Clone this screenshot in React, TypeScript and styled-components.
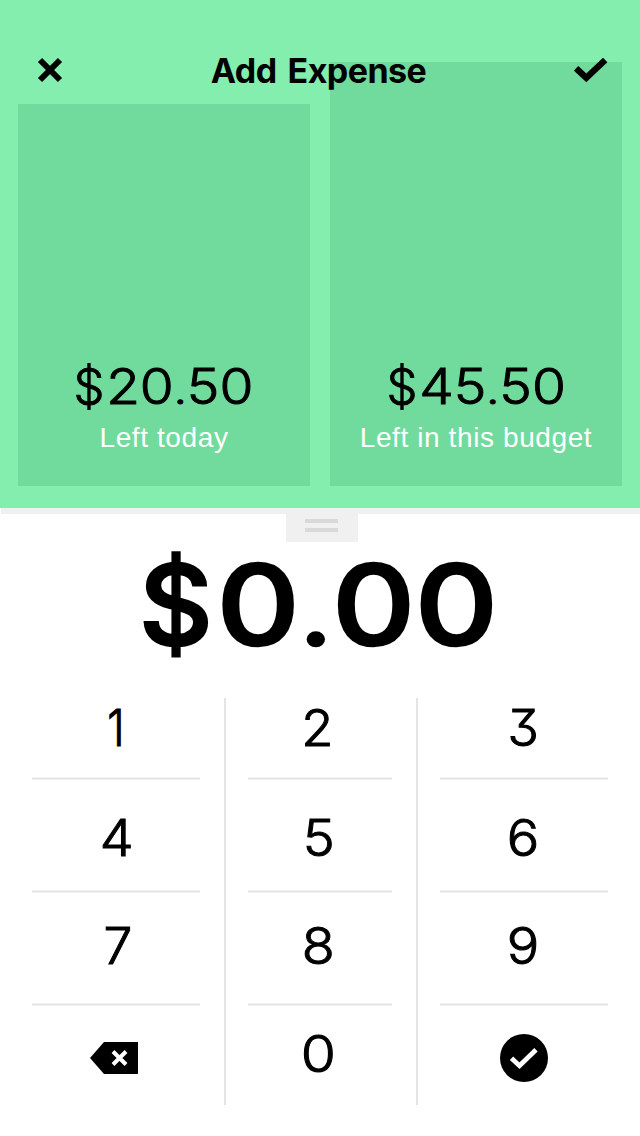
import React from "react";
import styled, { createGlobalStyle } from "styled-components";

const GlobalStyle = createGlobalStyle`
  * { box-sizing: border-box; }
  body { margin: 0; background: #fff; color: #000; font-family: Inter, "Liberation Sans", sans-serif; }
`;

const Screen = styled.main`
  width: 640px;
  height: 1136px;
  overflow: hidden;
  background: #fff;
  display: flex;
  flex-direction: column;
`;

const Summary = styled.section`
  position: relative;
  height: 508px;
  flex: none;
  background: #84eeaf;
  display: flex;
  align-items: flex-end;
  gap: 20px;
  padding: 0 18px 22px;
`;

const Header = styled.header`
  position: absolute;
  inset: 40px 0 auto 0;
  height: 60px;
  padding: 0 32px 0 37px;
  display: flex;
  align-items: center;
  justify-content: space-between;
`;

const Title = styled.h1`
  margin: 0;
  padding-top: 1px;
  font-size: 34px;
  line-height: 60px;
  font-weight: 680;
  letter-spacing: -0.55px;
  word-spacing: 3.5px;
  white-space: nowrap;
`;

const Card = styled.div<{ $height: number }>`
  width: 292px;
  height: ${(p) => p.$height}px;
  background: #71db9d;
  display: flex;
  flex-direction: column;
  align-items: center;
  justify-content: flex-end;
  padding-bottom: 30px;
`;

const Digits = styled.span<{ $size: number; $weight: number; $stroke: number; $scale: number }>`
  display: block;
  font-size: ${(p) => p.$size}px;
  line-height: 1.2;
  font-weight: ${(p) => p.$weight};
  font-feature-settings: "cv09";
  -webkit-text-stroke: ${(p) => p.$stroke}px #000;
  transform: scaleX(${(p) => p.$scale});
  white-space: nowrap;
`;

const Amount = styled(Digits)`
  margin: 0 1px 4px 0;
`;

const Currency = styled.span`
  display: inline-block;
  transform: scaleX(0.89);
  transform-origin: 12% 50%;
  margin-right: -0.03em;
`;

const Point = styled.span`
  font-size: 0.84em;
`;

const Label = styled.span`
  font-family: "Liberation Sans", Arial, sans-serif;
  font-size: 28px;
  line-height: 36px;
  letter-spacing: 0.6px;
  color: #fff;
`;

const Divider = styled.div`
  height: 6px;
  flex: none;
  margin-left: 1px;
  background: #f0f0f0;
`;

const Handle = styled.div`
  width: 72px;
  height: 28px;
  flex: none;
  margin-left: 286px;
  padding: 5px 20px 0 19px;
  background: #f0f0f0;
  display: flex;
  flex-direction: column;
  gap: 5px;
`;

const Grip = styled.i`
  height: 4px;
  background: #d9d9d9;
`;

const Entry = styled.div`
  height: 160px;
  margin-top: -4px;
  flex: none;
  display: flex;
  justify-content: center;
  padding-right: 5px;
`;

const Keypad = styled.section`
  height: 407px;
  display: flex;
`;

const Column = styled.div<{ $width: number; $left: number; $right: number; $rule?: boolean }>`
  width: ${(p) => p.$width}px;
  padding: 0 ${(p) => p.$right}px 0 ${(p) => p.$left}px;
  border-right: ${(p) => (p.$rule ? "2px solid #e4e4e4" : "0")};
  display: grid;
  grid-template-rows: 82px 113px 113px 99px;
`;

const Key = styled.button<{ $top: number; $shift: number }>`
  appearance: none;
  border: 0;
  background: linear-gradient(#f1f1f1 1px, #e2e2e2 1px 2px, #f1f1f1 2px) bottom / 100% 3px no-repeat;
  color: #000;
  font-family: inherit;
  padding: ${(p) => p.$top}px 0 0 ${(p) => p.$shift}px;
  display: flex;
  align-items: flex-start;
  justify-content: flex-start;
  &:last-child { background: none; }
`;

const Centered = styled.span`
  width: 60px;
  display: flex;
  justify-content: center;
`;

const Numeral = ({ children, scale = 1.08 }: { children: string; scale?: number }) => (
  <Centered>
    <Digits $size={50} $weight={300} $stroke={1} $scale={scale}>{children}</Digits>
  </Centered>
);

const Money = ({ whole, cents }: { whole: string; cents: string }) => (
  <>
    <Currency>$</Currency>{whole}<Point>.</Point>{cents}
  </>
);

const CloseIcon = () => (
  <svg width="26" height="26" viewBox="0 0 26 26">
    <path d="M3 3L23 23M23 3L3 23" stroke="#000" strokeWidth="6" />
  </svg>
);

const CheckIcon = () => (
  <svg width="34" height="26" viewBox="0 0 34 26">
    <path d="M2.1 11.3L12.3 20.8L31.2 3" fill="none" stroke="#000" strokeWidth="6.4" />
  </svg>
);

const DeleteIcon = () => (
  <svg width="48" height="32" viewBox="0 0 48 32">
    <path d="M0 16L14 0H48V32H14Z" />
    <path d="M23 9.5L36 22.5M36 9.5L23 22.5" stroke="#fff" strokeWidth="4" />
  </svg>
);

const DoneIcon = () => (
  <svg width="48" height="48" viewBox="0 0 48 48">
    <circle cx="24" cy="24" r="24" />
    <path d="M11.5 24.2L19.5 31.7L36 15.7" fill="none" stroke="#fff" strokeWidth="4.8" />
  </svg>
);

export default function App() {
  return (
    <>
      <GlobalStyle />
      <Screen>
        <Summary>
          <Card $height={382}>
            <Amount $size={49.5} $weight={300} $stroke={1} $scale={1.11}>
              <Money whole="20" cents="50" />
            </Amount>
            <Label>Left today</Label>
          </Card>
          <Card $height={424}>
            <Amount $size={49.5} $weight={300} $stroke={1} $scale={1.11}>
              <Money whole="45" cents="50" />
            </Amount>
            <Label>Left in this budget</Label>
          </Card>
          <Header>
            <CloseIcon />
            <Title>Add Expense</Title>
            <CheckIcon />
          </Header>
        </Summary>
        <Divider />
        <Handle><Grip /><Grip /></Handle>
        <Entry>
          <Digits $size={111} $weight={470} $stroke={2.5} $scale={1.155}>
            <Money whole="0" cents="00" />
          </Digits>
        </Entry>
        <Keypad>
          <Column $width={226} $left={32} $right={24} $rule>
            <Key $top={0} $shift={54}><Numeral scale={0.88}>1</Numeral></Key>
            <Key $top={28} $shift={55}><Numeral>4</Numeral></Key>
            <Key $top={23} $shift={55.5}><Numeral scale={1.03}>7</Numeral></Key>
            <Key $top={36} $shift={58}><DeleteIcon /></Key>
          </Column>
          <Column $width={192} $left={22} $right={24} $rule>
            <Key $top={0} $shift={39}><Numeral scale={1.05}>2</Numeral></Key>
            <Key $top={28} $shift={41}><Numeral>5</Numeral></Key>
            <Key $top={23} $shift={40}><Numeral>8</Numeral></Key>
            <Key $top={18} $shift={40.5}><Numeral scale={1.14}>0</Numeral></Key>
          </Column>
          <Column $width={222} $left={22} $right={32}>
            <Key $top={0} $shift={53}><Numeral scale={1.03}>3</Numeral></Key>
            <Key $top={28} $shift={53}><Numeral>6</Numeral></Key>
            <Key $top={23} $shift={53}><Numeral>9</Numeral></Key>
            <Key $top={28} $shift={60}><DoneIcon /></Key>
          </Column>
        </Keypad>
      </Screen>
    </>
  );
}
